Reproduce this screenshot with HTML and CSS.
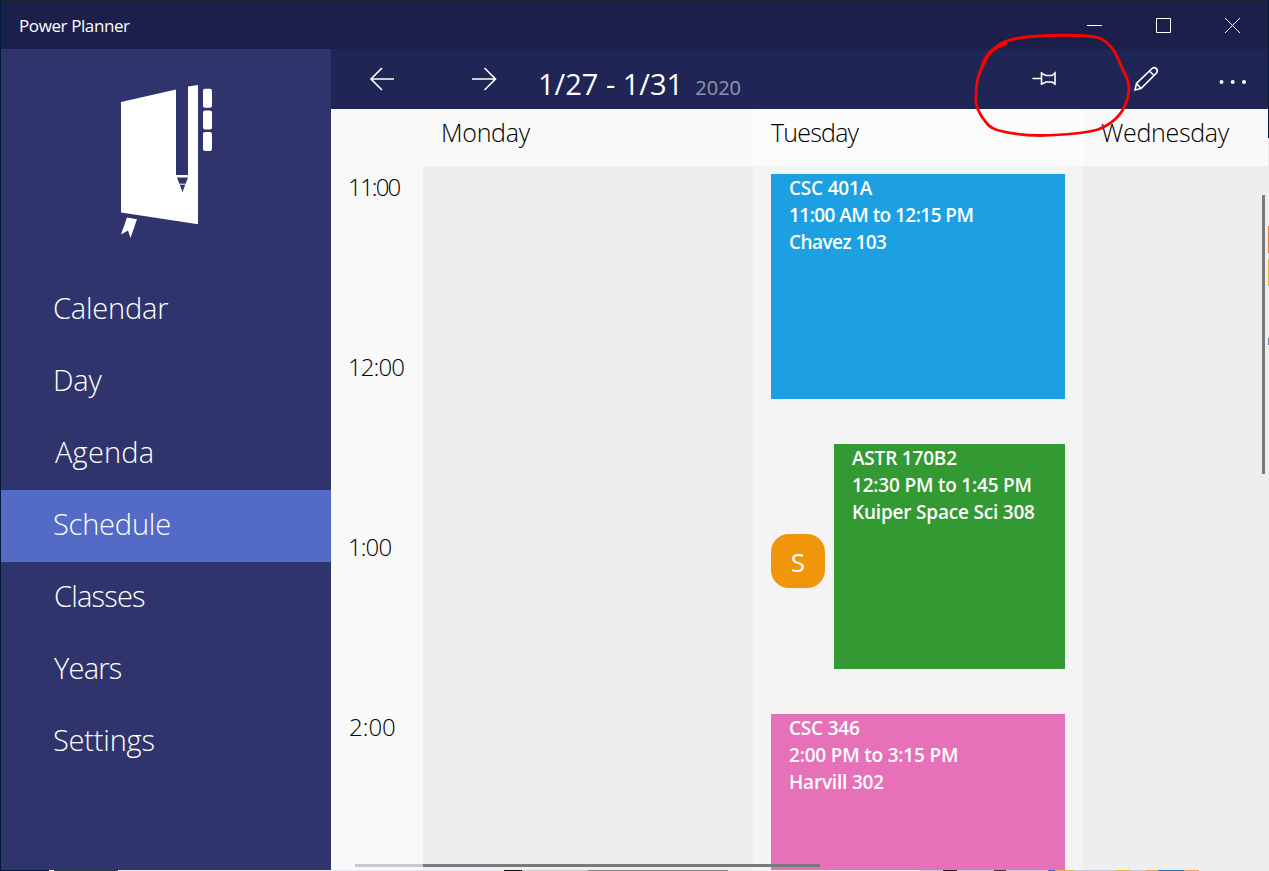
FILE: index.html
```html
<!DOCTYPE html>
<html lang="en">
  <head>
    <meta charset="UTF-8" />
    <meta name="viewport" content="width=device-width, initial-scale=1.0" />
    <title>Power Planner</title>
    <link rel="stylesheet" href="styles.css">
  </head>

  <body>
    <div class="window">
      <header class="title-bar">
        <span class="app-name">Power Planner</span>
        <svg class="window-buttons" width="207" height="48" viewBox="0 0 207 48">
          <path d="M26 24.5h15M95.500 17.500h14v14h-14zM164 17l15 15M179 17l-15 15" />
        </svg>
      </header>

      <div class="app">
        <aside class="sidebar">
          <svg class="logo" width="130" height="180" viewBox="0 0 130 180">
            <path d="M21 32L76 19.500V105H88V16.500L98 15V154.300L21 142.500zM77 107.500L82.500 122L88 107.500z" fill-rule="evenodd" />
            <path class="logo-line" d="M78 114.200h9" />
            <rect x="103" y="18.700" width="9" height="19" rx="2" />
            <rect x="103" y="40.500" width="9" height="19" rx="2" />
            <rect x="103" y="62" width="9" height="19" rx="2" />
            <path d="M27 147.500L37 149.300L30.500 168L28 160.500L21 164.500z" />
          </svg>
          <nav class="menu">
            <a class="menu-item">Calendar</a>
            <a class="menu-item">Day</a>
            <a class="menu-item agenda">Agenda</a>
            <a class="menu-item active">Schedule</a>
            <a class="menu-item tight">Classes</a>
            <a class="menu-item tight">Years</a>
            <a class="menu-item">Settings</a>
          </nav>
        </aside>

        <main class="content">
          <div class="toolbar">
            <svg class="arrows" width="204" height="60" viewBox="0 0 204 60">
              <path d="M63 30H40M51 19L40 30L51 41M141 30H164.500M153.500 19L164.500 30L153.500 41" />
            </svg>
            <div class="dates">
              <span class="range">1/27 - 1/31</span>
              <span class="year">2020</span>
            </div>
            <svg class="commands" width="260" height="60" viewBox="0 0 260 60">
              <path d="M24.500 29.500h8.500M33.500 23v13M33.500 25h1.500l3 1.500h6l3-2.500v11l-3-2h-6l-3 1.500H33.500" />
              <path d="M127 41l1.500-6.500L144 19.500c3-2.500 7 1.500 4.500 4.500L133 39.500zM128.500 34.500l4.500 5M141.500 22l4.500 4.500" />
              <g class="dots">
                <circle cx="213.500" cy="33" r="2" />
                <circle cx="224.700" cy="33" r="2" />
                <circle cx="236" cy="33" r="2" />
              </g>
            </svg>
          </div>

          <div class="schedule">
            <div class="hours">
              <div class="hour eleven">11:00</div>
              <div class="hour">12:00</div>
              <div class="hour">1:00</div>
              <div class="hour two">2:00</div>
            </div>
            <section class="day">
              <h2>Monday</h2>
              <div class="day-body"></div>
            </section>
            <section class="day today">
              <h2>Tuesday</h2>
              <div class="day-body">
                <div class="event blue">
                  <div>CSC 401A</div>
                  <div class="tight">11:00 AM to 12:15 PM</div>
                  <div class="tight">Chavez 103</div>
                </div>
                <div class="event-row">
                  <div class="badge">S</div>
                  <div class="event green">
                    <div>ASTR 170B2</div>
                    <div>12:30 PM to 1:45 PM</div>
                    <div>Kuiper Space Sci 308</div>
                  </div>
                </div>
                <div class="event pink">
                  <div>CSC 346</div>
                  <div>2:00 PM to 3:15 PM</div>
                  <div>Harvill 302</div>
                </div>
              </div>
            </section>
            <section class="day">
              <h2>Wednesday</h2>
              <div class="day-body"></div>
            </section>
          </div>
        </main>
      </div>

      <div class="scroll-y"></div>
      <div class="scroll-x"></div>
    </div>

    <div class="desktop-right"></div>
    <div class="desktop-bottom"></div>

    <!-- hand drawn circle around the pin button -->
    <svg class="marker" width="165" height="112" viewBox="970 30 165 112">
      <path d="M1006 44C994 48 989 52 985 62C978 72 976 84 976 96C975 108 979 111 982 117C987 124 990 128 997 130C1011 134 1026 135.500 1040 135.500C1060 135 1082 134 1098 129.500C1112 124 1122 114 1126 103C1132 88 1128 79 1122 68C1117 55 1112 43 1098 37.500C1086 35 1066 35 1050 35.500C1030 36 1012 38 1002 43C990 50 983 59 981.500 69" />
    </svg>
  </body>
</html>
```

FILE: styles.css
```css
body {
  margin: 0;
  height: 871px;
  position: relative;
  overflow: hidden;
  background-color: #001b38;
  font-family: "Open Sans", "Noto Sans", sans-serif;
}

.window {
  position: relative;
  width: 1267px;
  height: 869px;
  margin: 0 1px;
  border-top: 1px solid #18252c;
}

.title-bar {
  display: flex;
  justify-content: space-between;
  height: 48px;
  background-color: #1b1f49;
  color: white;
}

.app-name {
  padding-left: 18px;
  font-size: 17px;
  line-height: 49px;
  letter-spacing: -0.4px;
}

svg {
  display: block;
  fill: none;
  stroke: white;
}

.app {
  display: flex;
  height: 821px;
}

.sidebar {
  width: 330px;
  background-color: #2f356c;
}

.logo {
  margin: 21px 0 24px 99px;
  fill: white;
  stroke: none;
}

.logo .logo-line {
  stroke: white;
}

.menu-item {
  display: block;
  box-sizing: border-box;
  height: 72px;
  padding-left: 52px;
  line-height: 68px;
  font-size: 29px;
  font-weight: 300;
  letter-spacing: -0.2px;
  color: white;
}

.menu-item.tight {
  padding-left: 53px;
  letter-spacing: -0.8px;
}

.agenda {
  padding-left: 54px;
  letter-spacing: 0.2px;
}

.active {
  background-color: #536ac7;
}

.content {
  display: flex;
  flex-direction: column;
  width: 937px;
}

.toolbar {
  display: flex;
  height: 60px;
  background-color: #1f2555;
}

.arrows {
  stroke-width: 1.6;
}

.dates {
  flex: 1;
  padding-left: 3px;
  line-height: 70px;
  white-space: nowrap;
  color: white;
}

.range {
  font-size: 29px;
}

.year {
  margin-left: 8px;
  font-size: 20px;
  color: #9394ae;
}

.commands {
  stroke-width: 1.6;
}

.dots {
  fill: white;
  stroke: none;
}

.schedule {
  display: flex;
  flex: 1;
  overflow: hidden;
  background-color: #f9f9f9;
}

.hours {
  flex: 0 0 92px;
  padding-top: 60px;
  box-sizing: border-box;
}

.hour {
  height: 180px;
  padding-left: 17px;
  font-size: 24px;
  font-weight: 300;
  line-height: 36px;
  letter-spacing: -0.9px;
  color: black;
}

.hour.eleven {
  letter-spacing: -1.8px;
}

.hour.two {
  padding-left: 18px;
  letter-spacing: 0;
}

.day {
  display: flex;
  flex-direction: column;
  flex: 0 0 330px;
}

h2 {
  flex: 0 0 57px;
  margin: 0;
  padding-left: 18px;
  font-size: 25px;
  font-weight: 300;
  line-height: 47px;
  letter-spacing: -0.3px;
  color: black;
}

.today h2 {
  letter-spacing: -0.8px;
}

.day-body {
  flex: 1;
  min-height: 0;
  padding: 8px 18px 0;
  background-color: #eee;
}

.today {
  background-color: #fcfcfc;
}

.today .day-body {
  background-color: #f4f4f4;
}

.event {
  flex: 1;
  box-sizing: border-box;
  height: 225px;
  padding: 1px 0 0 18px;
  font-size: 19px;
  font-weight: 600;
  line-height: 27px;
  letter-spacing: -0.2px;
  white-space: nowrap;
  color: white;
}

.event .tight {
  letter-spacing: -0.55px;
}

.event-row {
  display: flex;
  align-items: flex-start;
  gap: 9px;
  margin: 45px 0;
}

.blue {
  background-color: #1ca0e2;
}

.green {
  background-color: #339933;
}

.pink {
  background-color: #e671b8;
}

.badge {
  width: 54px;
  height: 54px;
  margin-top: 90px;
  border-radius: 18px;
  background-color: #f0960a;
  color: white;
  font-size: 26px;
  line-height: 57px;
  text-align: center;
}

.scroll-y {
  position: absolute;
  top: 194px;
  right: 3px;
  width: 3px;
  height: 279px;
  background-color: #7a7a7a;
}

.scroll-x {
  position: absolute;
  left: 354px;
  bottom: 3px;
  width: 465px;
  height: 3px;
  background: linear-gradient(to right, #c9c9c9 68px, #7a7a7a 68px);
}

/* slivers of the desktop behind the window */
.desktop-right {
  position: absolute;
  top: 138px;
  right: 0;
  width: 1px;
  height: 732px;
  background: linear-gradient(#eee 88px, #e27b38 88px 115px, #eee 115px 121px, #e4b920 121px 148px, #eee 148px 200px, #777f91 200px 207px, #eee 207px);
}

.desktop-bottom {
  position: absolute;
  left: 0;
  bottom: 0;
  width: 1269px;
  height: 1px;
  background: linear-gradient(to right, #001b38 49px, #fff 49px 54px, #263d49 54px 118px, #e8e8ee 118px 504px, #111 504px 522px, #ccc 522px 588px, #888 588px 728px, #f1f1f1 728px 920px, #c4cbd5 920px 943px, #222 943px 957px, #c4cbd5 957px 994px, #333 994px 1006px, #c4cbd5 1006px 1048px, #2975c8 1048px 1055px, #dfbc35 1055px 1073px, #c4cbd5 1073px 1116px, #dfbc35 1116px 1129px, #c4cbd5 1129px 1145px, #eba865 1145px 1158px, #2975c8 1158px 1184px, #eba865 1184px 1199px, #eee 1199px);
}

.marker {
  position: absolute;
  top: 30px;
  left: 970px;
  stroke: red;
  stroke-width: 2.8;
  stroke-linecap: round;
}
```
